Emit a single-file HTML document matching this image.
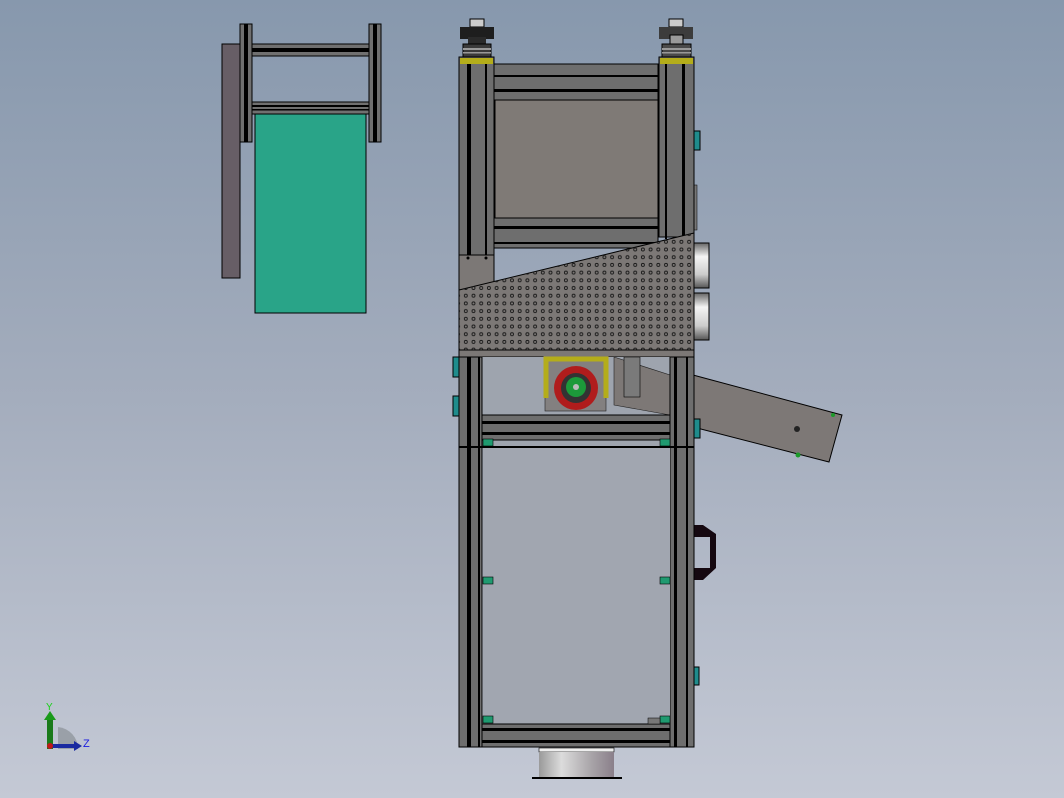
<!DOCTYPE html>
<html><head><meta charset="utf-8"><style>
html,body{margin:0;padding:0;width:1064px;height:798px;overflow:hidden}
body{background:linear-gradient(#8798ad,#a4adbd 50%,#c4c9d5)}
svg{position:absolute;left:0;top:0}
</style></head><body>
<svg width="1064" height="798" viewBox="0 0 1064 798" xmlns="http://www.w3.org/2000/svg">
<defs>
<pattern id="perf" x="462" y="238" width="7.7" height="7.7" patternUnits="userSpaceOnUse">
<circle cx="3.8" cy="3.8" r="1.5" fill="none" stroke="#1a1a1a" stroke-width=".9"/>
</pattern>
<linearGradient id="cyl" x1="0" x2="1"><stop offset="0" stop-color="#9a9a9a"/><stop offset=".3" stop-color="#dcdcdc"/><stop offset=".7" stop-color="#a8a4a8"/><stop offset="1" stop-color="#8a7f8a"/></linearGradient>
<linearGradient id="ring" x1="0" y1="0" x2="0" y2="1"><stop offset="0" stop-color="#666"/><stop offset=".3" stop-color="#f4f4f4"/><stop offset=".7" stop-color="#ccc"/><stop offset="1" stop-color="#555"/></linearGradient>
</defs>

<!-- left figure -->
<rect x="222" y="44" width="18" height="234" fill="#675e66" stroke="#000"/>
<rect x="255" y="114" width="111" height="199" fill="#29a488" stroke="#000"/>
<rect x="252" y="44" width="117" height="12" fill="#707070" stroke="#000"/>
<rect x="252" y="48" width="117" height="4" fill="#000"/>
<rect x="252" y="102" width="117" height="12" fill="#707070" stroke="#000"/>
<rect x="252" y="105" width="117" height="2" fill="#000"/><rect x="252" y="109" width="117" height="1.5" fill="#000"/>
<rect x="240" y="24" width="12" height="118" fill="#707070" stroke="#000"/><rect x="244" y="24" width="4" height="118" fill="#000"/>
<rect x="369" y="24" width="12" height="118" fill="#707070" stroke="#000"/><rect x="373" y="24" width="4" height="118" fill="#000"/>

<!-- right side attachments -->
<polygon points="693,375 842,415 829,462 693,427" fill="#7d7876" stroke="#000"/>
<circle cx="797" cy="429" r="3" fill="#222"/><circle cx="798" cy="455" r="2.5" fill="#1c9a2a"/><circle cx="833" cy="415" r="2" fill="#1c9a2a"/>
<rect x="694" y="243" width="15" height="45" fill="url(#ring)" stroke="#000"/>
<rect x="694" y="293" width="15" height="47" fill="url(#ring)" stroke="#000"/>
<rect x="694" y="131" width="6" height="19" fill="#1f8c8c" stroke="#000"/>
<rect x="694" y="419" width="6" height="19" fill="#1f8c8c" stroke="#000"/>
<rect x="694" y="667" width="5" height="18" fill="#1f8c8c" stroke="#000"/>
<rect x="453" y="357" width="6" height="20" fill="#1f8c8c" stroke="#000"/>
<rect x="453" y="396" width="6" height="20" fill="#1f8c8c" stroke="#000"/>
<path d="M694 525 H703 L716 534 V568 L703 580 H694 V568 H710 V537 H694 Z" fill="#150810"/>
<rect x="694" y="185" width="3" height="45" fill="#777" stroke="#000" stroke-width=".5"/>

<!-- bottom cylinder -->
<rect x="539" y="748" width="75" height="4" fill="#eee" stroke="#000" stroke-width=".6"/>
<rect x="539" y="752" width="75" height="26" fill="url(#cyl)"/>
<rect x="532" y="777" width="90" height="2" fill="#000"/>

<!-- top motors -->
<g>
<rect x="470" y="19" width="14" height="8" fill="#ccc" stroke="#000"/>
<rect x="460" y="27" width="34" height="12" fill="#1e1e1e"/>
<rect x="468" y="37" width="18" height="12" fill="#2a2a2a"/>
<rect x="463" y="44" width="28" height="13" fill="#3a3a3a" stroke="#000"/>
<rect x="463" y="48" width="28" height="2" fill="#999"/><rect x="463" y="52" width="28" height="1.5" fill="#999"/>
<rect x="669" y="19" width="14" height="8" fill="#ccc" stroke="#000"/>
<rect x="659" y="27" width="34" height="12" fill="#3c3c3c"/>
<rect x="670" y="35" width="13" height="14" fill="#9a9a9a" stroke="#000"/>
<rect x="662" y="44" width="29" height="13" fill="#4a4a4a" stroke="#000"/>
<rect x="662" y="48" width="29" height="2" fill="#999"/><rect x="662" y="52" width="29" height="1.5" fill="#999"/>
</g>

<!-- upper frame -->
<rect x="494" y="64" width="164" height="36" fill="#6e6e6e" stroke="#000"/>
<rect x="494" y="75" width="164" height="2" fill="#000"/><rect x="494" y="89" width="164" height="3" fill="#000"/>
<rect x="495" y="100" width="163" height="118" fill="#7f7a76" stroke="#000"/>
<rect x="494" y="218" width="164" height="30" fill="#6e6e6e" stroke="#000"/>
<rect x="494" y="226" width="164" height="3" fill="#000"/><rect x="494" y="242" width="164" height="2" fill="#000"/>
<rect x="459" y="57" width="35" height="233" fill="#6e6e6e" stroke="#000"/>
<rect x="467" y="64" width="4" height="226" fill="#000"/><rect x="485" y="64" width="2" height="226" fill="#000"/>
<rect x="659" y="57" width="35" height="180" fill="#6e6e6e" stroke="#000"/>
<rect x="665" y="64" width="2" height="175" fill="#000"/><rect x="682" y="64" width="3" height="175" fill="#000"/>
<rect x="460" y="58" width="33" height="6" fill="#b4ad1a"/><rect x="660" y="58" width="33" height="6" fill="#b4ad1a"/>
<rect x="459" y="255" width="35" height="35" fill="#7c7876" stroke="#000"/>
<circle cx="468" cy="258" r="1.5" fill="#000"/><circle cx="486" cy="258" r="1.5" fill="#000"/>

<!-- perforated panel -->
<polygon points="459,290 694,233 694,350 459,350" fill="#7c7876" stroke="#000"/>
<polygon points="459,290 694,233 694,350 459,350" fill="url(#perf)"/>
<rect x="459" y="350" width="235" height="7" fill="#7c7876" stroke="#000"/>

<!-- middle section -->
<rect x="482" y="357" width="188" height="90" fill="#9ea4ae"/>
<rect x="545" y="357" width="61" height="54" fill="#838080" stroke="#222" stroke-width=".6"/>
<polygon points="614,357 670,375 670,415 614,405" fill="#7d7876" stroke="#222" stroke-width=".6"/>
<rect x="624" y="357" width="16" height="40" fill="#7a7a7a" stroke="#000" stroke-width=".6"/>
<path d="M546 398 V359 H606 V398" fill="none" stroke="#b4ad1a" stroke-width="5"/>
<circle cx="576" cy="388" r="22" fill="#b01c1c"/>
<circle cx="576" cy="388" r="15" fill="#333"/>
<circle cx="576" cy="387" r="10" fill="#1c9a3a"/>
<circle cx="576" cy="387" r="3" fill="#bbb"/>
<rect x="482" y="415" width="188" height="25" fill="#6e6e6e" stroke="#000"/>
<rect x="482" y="421" width="188" height="3" fill="#000"/><rect x="482" y="432" width="188" height="3" fill="#000"/>
<rect x="459" y="357" width="23" height="390" fill="#6e6e6e" stroke="#000"/>
<rect x="467" y="357" width="4" height="390" fill="#000"/><rect x="478" y="357" width="2" height="390" fill="#000"/>
<rect x="670" y="357" width="24" height="390" fill="#6e6e6e" stroke="#000"/>
<rect x="674" y="357" width="3" height="390" fill="#000"/><rect x="686" y="357" width="2" height="390" fill="#000"/>
<rect x="459" y="446" width="235" height="2" fill="#000"/>

<!-- lower section -->
<rect x="483" y="448" width="187" height="276" fill="#a1a6b0"/>
<rect x="482" y="724" width="188" height="23" fill="#6e6e6e" stroke="#000"/>
<rect x="482" y="728" width="188" height="3" fill="#000"/><rect x="482" y="740" width="188" height="3" fill="#000"/>
<g fill="#1f9a70" stroke="#000" stroke-width=".6">
<rect x="483" y="439" width="10" height="7"/><rect x="660" y="439" width="10" height="7"/>
<rect x="483" y="577" width="10" height="7"/><rect x="660" y="577" width="10" height="7"/>
<rect x="483" y="716" width="10" height="7"/><rect x="660" y="716" width="10" height="7"/>
</g>
<rect x="648" y="718" width="12" height="6" fill="#777" stroke="#000" stroke-width=".5"/>

<!-- triad -->
<path d="M58 749 V727 A22 22 0 0 1 78 749 Z" fill="#9aa0a8"/>
<rect x="47" y="718" width="6" height="31" fill="#1a7a1a"/><polygon points="44,720 50,711 56,720" fill="#1a9a1a"/>
<rect x="50" y="744" width="25" height="4" fill="#1a2aa0"/><polygon points="74,741 82,746 74,751" fill="#1a2aa0"/>
<circle cx="50" cy="746" r="3" fill="#c01818"/>
<text x="46" y="710" font-family="Liberation Sans, sans-serif" font-size="10" fill="#1ad01a">Y</text>
<text x="83" y="747" font-family="Liberation Sans, sans-serif" font-size="11" fill="#1a1ae0">Z</text>
</svg>
</body></html>
